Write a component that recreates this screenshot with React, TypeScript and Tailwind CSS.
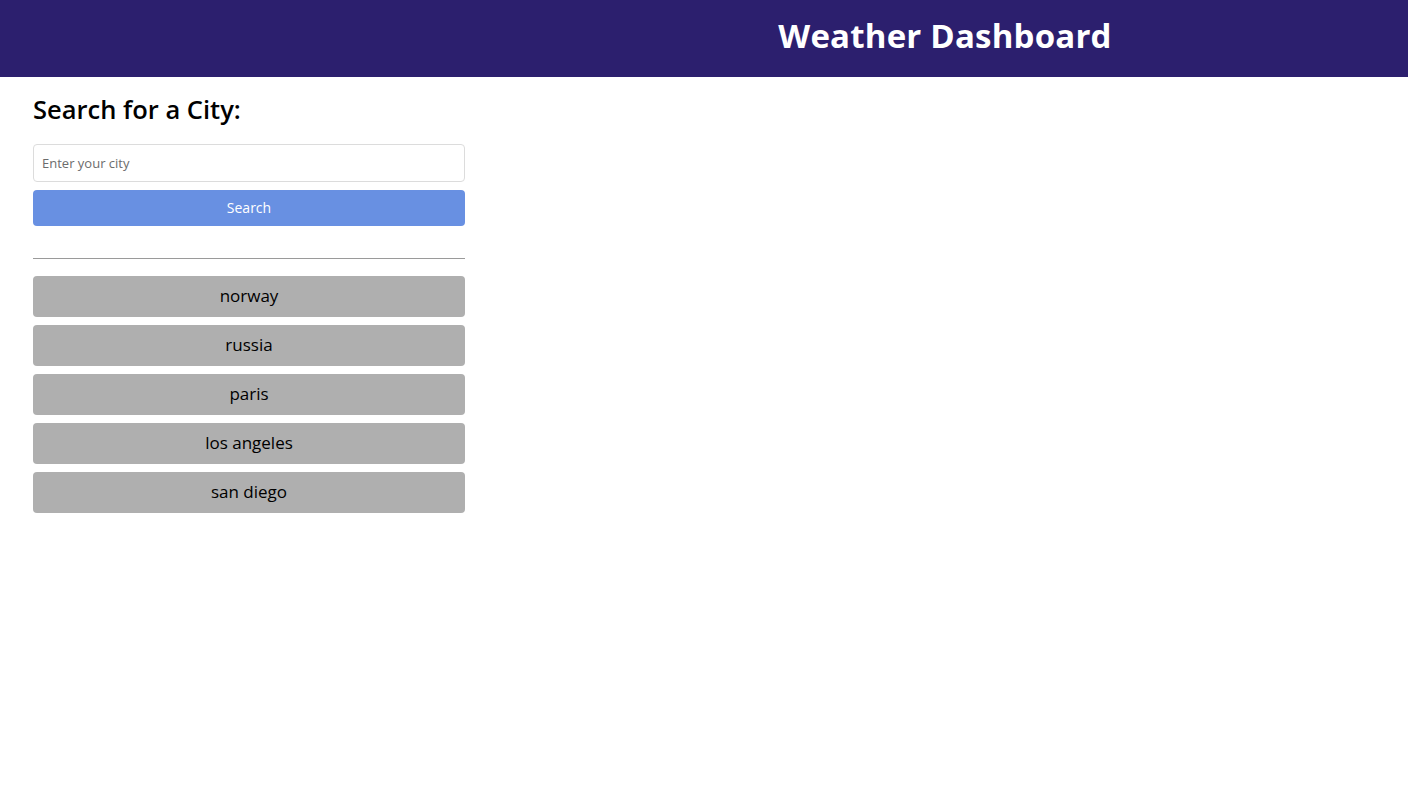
import React from "react";

const cities = ["norway", "russia", "paris", "los angeles", "san diego"];

export default function App() {
  return (
    <div className="min-h-[802px] bg-white" style={{ fontFamily: '"Open Sans", "Noto Sans", sans-serif' }}>
      <header className="flex h-[77px] items-center justify-center bg-[#2c1f6e] pb-[5px] pl-[482px]">
        <h1 className="text-[33px] font-bold leading-[40px] text-white tracking-[0.2px]">Weather Dashboard</h1>
      </header>
      <div className="w-[432px] ml-[33px] pt-[15px]">
        <h2 className="text-[25.5px] font-semibold leading-[34px] text-black">Search for a City:</h2>
        <input
          className="mt-[18px] block h-[38px] w-full rounded-[4px] border border-[#dcdcdc] px-[8px] text-[13px] text-[#555] placeholder:text-[#6c6c6c] outline-none"
          placeholder="Enter your city"
        />
        <button className="mt-[8px] block h-[36px] w-full rounded-[4px] bg-[#6890e2] pb-[2px] text-[14px] text-white">
          Search
        </button>
        <hr className="mt-[32px] border-0 border-t border-[#9a9a9a]" />
        <div className="mt-[17px] flex flex-col gap-[8px]">
          {cities.map((c) => (
            <button key={c} className="h-[41px] w-full rounded-[4px] bg-[#afafaf] pb-[1px] text-[17px] text-black">
              {c}
            </button>
          ))}
        </div>
      </div>
    </div>
  );
}
